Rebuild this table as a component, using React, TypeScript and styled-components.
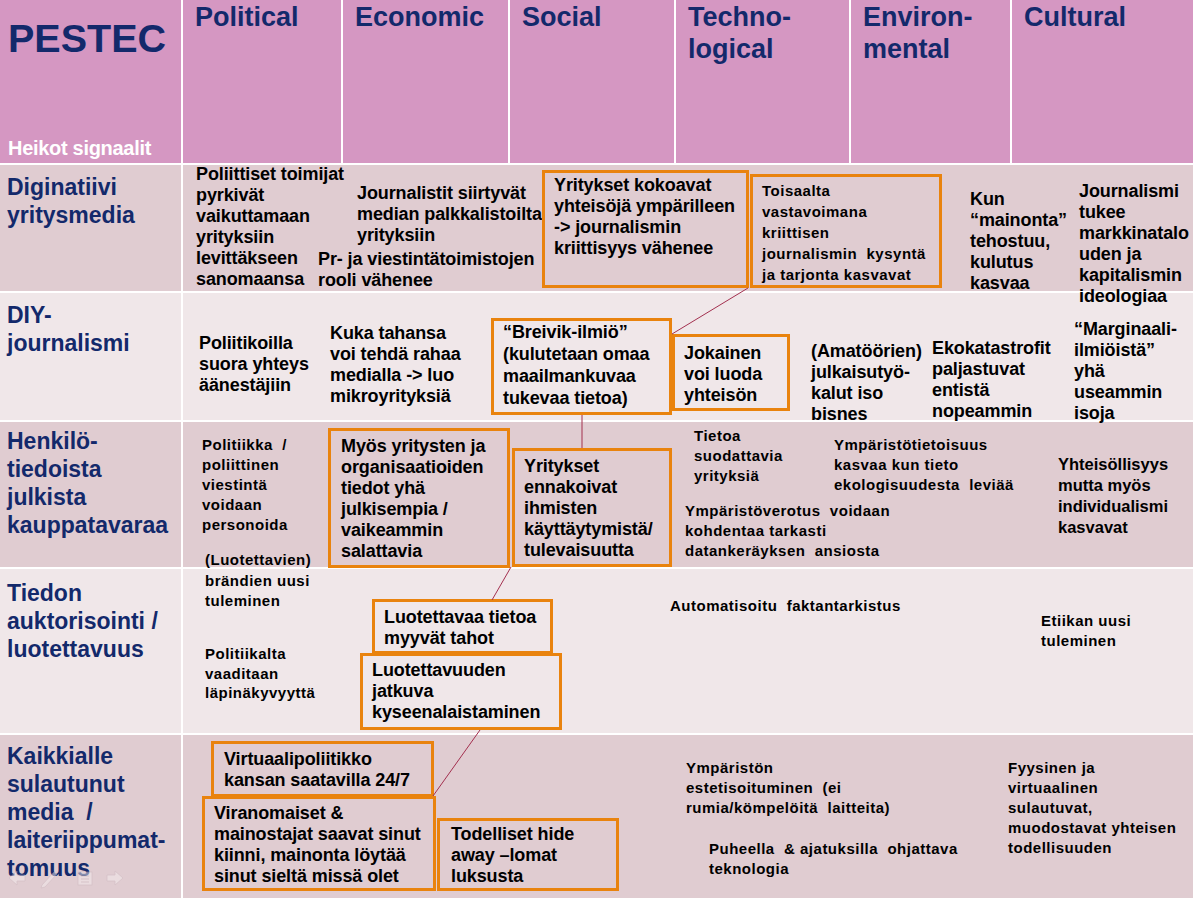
import React from 'react';
import styled, { createGlobalStyle } from 'styled-components';

const GlobalStyle = createGlobalStyle`
  html, body { margin: 0; padding: 0; background: #fff; }
  body { font-family: "Liberation Sans", Arial, sans-serif; overflow: hidden; }
`;

const NAVY = '#13296B';
const HEAD = '#D597C2';
const DARK = '#E0CCD1';
const LIGHT = '#F0E7E9';
const ORANGE = '#E9830E';

const Slide = styled.div`
  position: relative;
  width: 1193px;
  height: 898px;
  display: grid;
  grid-template-rows: 163px 126px 127px 145px 164px 163px;
  row-gap: 2px;
  background: #fff;
  overflow: hidden;
`;

const HeaderRow = styled.div`
  display: grid;
  grid-template-columns: 181px 158px 165px 164px 173px 159px 1fr;
  column-gap: 2px;
`;

const CornerCell = styled.div`
  background: ${HEAD};
  display: flex;
  flex-direction: column;
  justify-content: space-between;
  padding: 16px 0 3px 8px;
`;

const Title = styled.div`
  font-size: 39.5px;
  line-height: 45px;
  font-weight: bold;
  color: ${NAVY};
`;

const Subtitle = styled.div`
  font-size: 20px;
  line-height: 23px;
  font-weight: bold;
  color: #fff;
  letter-spacing: -0.3px;
`;

const HeaderCell = styled.div`
  background: ${HEAD};
  padding: 1px 6px 0 12px;
  color: ${NAVY};
  font-weight: bold;
  font-size: 27px;
  line-height: 32px;
  white-space: pre-line;
`;

const Row = styled.div`
  display: grid;
  grid-template-columns: 181px 1fr;
  column-gap: 2px;
`;

const Label = styled.div<{ $tone: 'dark' | 'light'; $pad: number }>`
  background: ${(p) => (p.$tone === 'dark' ? DARK : LIGHT)};
  padding: ${(p) => p.$pad}px 4px 0 7px;
  font-size: 23px;
  line-height: 28px;
  font-weight: bold;
  color: ${NAVY};
  white-space: pre;
`;

const Content = styled.div<{ $tone: 'dark' | 'light' }>`
  position: relative;
  background: ${(p) => (p.$tone === 'dark' ? DARK : LIGHT)};
`;

type Size = 'lg' | 'md' | 'sm';
const fontSize: Record<Size, string> = { lg: '18px', md: '16.5px', sm: '15px' };
const spacing: Record<Size, string> = { lg: '-0.1px', md: '0px', sm: '0.5px' };

const Note = styled.div<{ $x: number; $y: number; $size: Size; $lh: number }>`
  position: absolute;
  z-index: 1;
  left: ${(p) => p.$x}px;
  top: ${(p) => p.$y}px;
  white-space: pre;
  font-weight: bold;
  color: #000;
  font-size: ${(p) => fontSize[p.$size]};
  line-height: ${(p) => p.$lh}px;
  letter-spacing: ${(p) => spacing[p.$size]};
`;

const Box = styled(Note)<{ $w: number; $h: number; $pt: number; $pl: number }>`
  width: ${(p) => p.$w}px;
  height: ${(p) => p.$h}px;
  box-sizing: border-box;
  border: 3px solid ${ORANGE};
  padding: ${(p) => p.$pt}px 0 0 ${(p) => p.$pl}px;
`;

const Connectors = styled.svg`
  position: absolute;
  left: 0;
  top: 0;
  z-index: 2;
  pointer-events: none;
`;

const NavIcons = styled.svg`
  position: absolute;
  left: 6px;
  top: 866px;
  z-index: 1;
  opacity: 0.5;
`;

type Item = {
  x: number;
  y: number;
  size: Size;
  lh?: number;
  text: string[];
  box?: { w: number; h: number; pt: number; pl: number };
};

type RowDef = {
  label: string;
  tone: 'dark' | 'light';
  pad: number;
  top: number;
  items: Item[];
};

const rows: RowDef[] = [
  {
    label: 'Diginatiivi\nyritysmedia',
    tone: 'dark',
    pad: 8,
    top: 165,
    items: [
      { x: 196, y: 164, size: 'lg', text: ['Poliittiset toimijat', 'pyrkivät', 'vaikuttamaan', 'yrityksiin'] },
      { x: 196, y: 248, size: 'lg', text: ['levittäkseen', 'sanomaansa'] },
      { x: 357, y: 182.5, size: 'lg', text: ['Journalistit siirtyvät', 'median palkkalistoilta', 'yrityksiin'] },
      { x: 318, y: 248.5, size: 'lg', text: ['Pr- ja viestintätoimistojen', 'rooli vähenee'] },
      {
        x: 542, y: 170, size: 'lg',
        text: ['Yritykset kokoavat', 'yhteisöjä ympärilleen', '-> journalismin', 'kriittisyys vähenee'],
        box: { w: 207, h: 118, pt: 1.5, pl: 9 },
      },
      {
        x: 750, y: 174, size: 'sm', lh: 21,
        text: ['Toisaalta', 'vastavoimana', 'kriittisen', 'journalismin  kysyntä', 'ja tarjonta kasvavat'],
        box: { w: 192, h: 114, pt: 2.5, pl: 9 },
      },
      { x: 970, y: 188.5, size: 'lg', text: ['Kun', '“mainonta”', 'tehostuu,', 'kulutus', 'kasvaa'] },
      { x: 1079, y: 180.5, size: 'lg', text: ['Journalismi', 'tukee', 'markkinatalo', 'uden ja', 'kapitalismin', 'ideologiaa'] },
    ],
  },
  {
    label: 'DIY-\njournalismi',
    tone: 'light',
    pad: 8,
    top: 293,
    items: [
      { x: 199, y: 332.5, size: 'lg', text: ['Poliitikoilla', 'suora yhteys', 'äänestäjiin'] },
      { x: 330, y: 322.5, size: 'lg', text: ['Kuka tahansa', 'voi tehdä rahaa', 'medialla -> luo', 'mikroyrityksiä'] },
      {
        x: 491, y: 318, size: 'lg', lh: 22,
        text: ['“Breivik-ilmiö”', '(kulutetaan omaa', 'maailmankuvaa', 'tukevaa tietoa)'],
        box: { w: 181, h: 97, pt: 0, pl: 9 },
      },
      {
        x: 672, y: 334, size: 'lg',
        text: ['Jokainen', 'voi luoda', 'yhteisön'],
        box: { w: 118, h: 77, pt: 5.5, pl: 9 },
      },
      { x: 811, y: 340.5, size: 'lg', text: ['(Amatöörien)', 'julkaisutyö-', 'kalut iso', 'bisnes'] },
      { x: 932, y: 337.5, size: 'lg', text: ['Ekokatastrofit', 'paljastuvat', 'entistä', 'nopeammin'] },
      { x: 1074, y: 318.5, size: 'lg', text: ['“Marginaali-', 'ilmiöistä”', 'yhä', 'useammin', 'isoja'] },
    ],
  },
  {
    label: 'Henkilö-\ntiedoista\njulkista\nkauppatavaraa',
    tone: 'dark',
    pad: 5,
    top: 422,
    items: [
      { x: 202, y: 435, size: 'sm', lh: 20, text: ['Politiikka  /', 'poliittinen', 'viestintä', 'voidaan', 'personoida'] },
      { x: 205, y: 550, size: 'sm', lh: 20.5, text: ['(Luotettavien)', 'brändien uusi', 'tuleminen'] },
      {
        x: 328, y: 428, size: 'lg',
        text: ['Myös yritysten ja', 'organisaatioiden', 'tiedot yhä', 'julkisempia /', 'vaikeammin', 'salattavia'],
        box: { w: 182, h: 140, pt: 4.5, pl: 10 },
      },
      {
        x: 512, y: 448, size: 'lg',
        text: ['Yritykset', 'ennakoivat', 'ihmisten', 'käyttäytymistä/', 'tulevaisuutta'],
        box: { w: 160, h: 119, pt: 4.5, pl: 9 },
      },
      { x: 694, y: 426, size: 'sm', lh: 20, text: ['Tietoa', 'suodattavia', 'yrityksiä'] },
      { x: 834, y: 435, size: 'sm', lh: 20, text: ['Ympäristötietoisuus', 'kasvaa kun tieto', 'ekologisuudesta  leviää'] },
      { x: 685, y: 501, size: 'sm', lh: 20, text: ['Ympäristöverotus  voidaan', 'kohdentaa tarkasti', 'datankeräyksen  ansiosta'] },
      { x: 1058, y: 453.5, size: 'md', text: ['Yhteisöllisyys', 'mutta myös', 'individualismi', 'kasvavat'] },
    ],
  },
  {
    label: 'Tiedon\nauktorisointi /\nluotettavuus',
    tone: 'light',
    pad: 10,
    top: 569,
    items: [
      { x: 205, y: 644, size: 'sm', lh: 19.5, text: ['Politiikalta', 'vaaditaan', 'läpinäkyvyyttä'] },
      {
        x: 372, y: 599, size: 'lg',
        text: ['Luotettavaa tietoa', 'myyvät tahot'],
        box: { w: 181, h: 55, pt: 4.5, pl: 9 },
      },
      {
        x: 360, y: 653, size: 'lg',
        text: ['Luotettavuuden', 'jatkuva', 'kyseenalaistaminen'],
        box: { w: 202, h: 77, pt: 3.5, pl: 9 },
      },
      { x: 670, y: 596, size: 'sm', lh: 20, text: ['Automatisoitu  faktantarkistus'] },
      { x: 1041, y: 611, size: 'sm', lh: 20, text: ['Etiikan uusi', 'tuleminen'] },
    ],
  },
  {
    label: 'Kaikkialle\nsulautunut\nmedia  /\nlaiteriippumat-\ntomuus',
    tone: 'dark',
    pad: 7,
    top: 735,
    items: [
      {
        x: 211, y: 741, size: 'lg',
        text: ['Virtuaalipoliitikko', 'kansan saatavilla 24/7'],
        box: { w: 223, h: 56, pt: 4.5, pl: 10 },
      },
      {
        x: 202, y: 796, size: 'lg',
        text: ['Viranomaiset &', 'mainostajat saavat sinut', 'kiinni, mainonta löytää', 'sinut sieltä missä olet'],
        box: { w: 234, h: 95, pt: 3.5, pl: 9 },
      },
      {
        x: 437, y: 818, size: 'lg',
        text: ['Todelliset hide', 'away –lomat', 'luksusta'],
        box: { w: 182, h: 73, pt: 2.5, pl: 11 },
      },
      { x: 686, y: 758, size: 'sm', lh: 20, text: ['Ympäristön', 'estetisoituminen  (ei', 'rumia/kömpelöitä  laitteita)'] },
      { x: 709, y: 839, size: 'sm', lh: 20, text: ['Puheella  & ajatuksilla  ohjattava', 'teknologia'] },
      { x: 1008, y: 758, size: 'sm', lh: 20, text: ['Fyysinen ja', 'virtuaalinen', 'sulautuvat,', 'muodostavat yhteisen', 'todellisuuden'] },
    ],
  },
];

const headers = ['Political', 'Economic', 'Social', 'Techno-\nlogical', 'Environ-\nmental', 'Cultural'];
const CONTENT_X = 183;

const renderItem = (it: Item, rowTop: number, key: number) => {
  const x = it.x - CONTENT_X;
  const y = it.y - rowTop;
  const lh = it.lh ?? 21;
  const text = it.text.join('\n');
  if (it.box) {
    return (
      <Box
        key={key}
        $x={x}
        $y={y}
        $size={it.size}
        $lh={lh}
        $w={it.box.w}
        $h={it.box.h}
        $pt={it.box.pt}
        $pl={it.box.pl}
      >
        {text}
      </Box>
    );
  }
  return (
    <Note key={key} $x={x} $y={y} $size={it.size} $lh={lh}>
      {text}
    </Note>
  );
};

export default function App() {
  return (
    <>
      <GlobalStyle />
      <Slide>
        <HeaderRow>
          <CornerCell>
            <Title>PESTEC</Title>
            <Subtitle>Heikot signaalit</Subtitle>
          </CornerCell>
          {headers.map((h) => (
            <HeaderCell key={h}>{h}</HeaderCell>
          ))}
        </HeaderRow>
        {rows.map((r, i) => (
          <Row key={i}>
            <Label $tone={r.tone} $pad={r.pad}>
              {r.label}
            </Label>
            <Content $tone={r.tone}>{r.items.map((it, j) => renderItem(it, r.top, j))}</Content>
          </Row>
        ))}
        <Connectors width={1193} height={898} viewBox="0 0 1193 898">
          <g stroke="#A3304F" strokeWidth={1} fill="none">
            <line x1={748} y1={288} x2={672} y2={334} />
            <line x1={582} y1={415} x2={582} y2={448} />
            <line x1={511} y1={567} x2={492} y2={600} />
            <line x1={480} y1={730} x2={433} y2={796} />
          </g>
        </Connectors>
        <NavIcons width={124} height={24} viewBox="0 0 124 24">
          <g fill="#F4ECEE" stroke="#CDB9BF" strokeWidth={0.8}>
            <path d="M3 12 L11 5 L11 9 L19 9 L19 15 L11 15 L11 19 Z" />
            <path d="M36 19 L48 6 L51 8 L39 21 L35 22 Z" />
            <rect x={72} y={6} width={14} height={13} />
            <path d="M101 9 L109 9 L109 5 L117 12 L109 19 L109 15 L101 15 Z" />
          </g>
          <g stroke="#CDB9BF" strokeWidth={1}>
            <line x1={75} y1={10} x2={83} y2={10} />
            <line x1={75} y1={13} x2={83} y2={13} />
            <line x1={75} y1={16} x2={83} y2={16} />
          </g>
        </NavIcons>
      </Slide>
    </>
  );
}
